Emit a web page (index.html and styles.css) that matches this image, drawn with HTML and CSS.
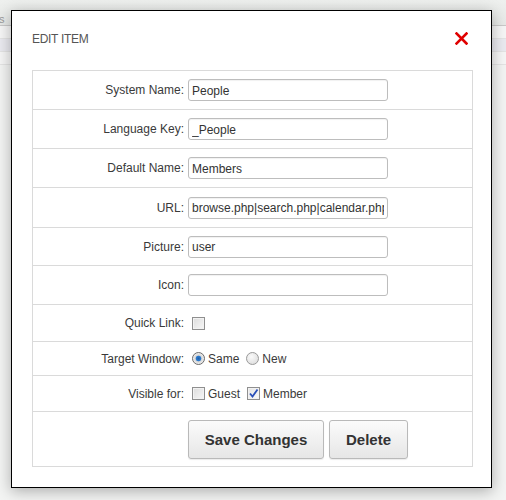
FILE: index.html
```html
<!DOCTYPE html>
<html>
<head>
<meta charset="utf-8">
<link rel="stylesheet" href="styles.css">
</head>
<body>
<div class="page">
  <div class="topbar"><span class="crumb">s</span></div>
  <div class="band"></div>
  <div class="band alt"></div>
  <div class="band"></div>
</div>

<div class="modal">
  <div class="modal-head">
    <span class="modal-title">EDIT ITEM</span>
    <span class="close" aria-label="close">
      <svg width="13" height="13" viewBox="0 0 13 13"><path d="M1.5 1.5 L11.5 11.5 M11.5 1.5 L1.5 11.5" stroke="#e00000" stroke-width="2.6" stroke-linecap="square"/></svg>
    </span>
  </div>
  <table class="form">
    <tr class="r-text"><td class="lbl">System Name:</td><td class="fld"><input class="txt" type="text" value="People"></td></tr>
    <tr class="r-text"><td class="lbl">Language Key:</td><td class="fld"><input class="txt" type="text" value="_People"></td></tr>
    <tr class="r-text"><td class="lbl">Default Name:</td><td class="fld"><input class="txt" type="text" value="Members"></td></tr>
    <tr class="r-text r-tall"><td class="lbl">URL:</td><td class="fld"><input class="txt" type="text" value="browse.php|search.php|calendar.php"></td></tr>
    <tr class="r-text r-short"><td class="lbl">Picture:</td><td class="fld"><input class="txt" type="text" value="user"></td></tr>
    <tr class="r-text"><td class="lbl">Icon:</td><td class="fld"><input class="txt" type="text" value=""></td></tr>
    <tr class="r-quick"><td class="lbl">Quick Link:</td><td class="fld"><span class="opts"><span class="cb"></span></span></td></tr>
    <tr class="r-target"><td class="lbl">Target Window:</td><td class="fld"><span class="opts"><span class="rd on"></span><span class="opt-t">Same</span><span class="rd"></span><span class="opt-t">New</span></span></td></tr>
    <tr class="r-vis"><td class="lbl">Visible for:</td><td class="fld"><span class="opts"><span class="cb"></span><span class="opt-t">Guest</span><span class="cb on"><svg width="11" height="11" viewBox="0 0 11 11"><path d="M2 5.5 L4.5 8.5 L9.5 1.5" fill="none" stroke="#2a4fb8" stroke-width="1.8"/></svg></span><span class="opt-t">Member</span></span></td></tr>
    <tr class="r-btn"><td class="lbl"></td><td class="fld"><div class="btns"><button class="btn save">Save Changes</button><button class="btn del">Delete</button></div></td></tr>
  </table>
</div>
</body>
</html>
```

FILE: styles.css
```css
html, body {
  margin: 0;
  padding: 0;
}
body {
  width: 506px;
  height: 500px;
  overflow: hidden;
  background: #f3f4f3;
  font-family: "Liberation Sans", Arial, sans-serif;
  font-size: 12px;
  color: #333;
  position: relative;
}
.page {
  width: 506px;
}
.topbar {
  height: 26px;
  background: linear-gradient(#eef0ee, #e7e9e7);
  border-bottom: 1px solid #c9c9c9;
  box-sizing: border-box;
  position: relative;
}
.crumb {
  display: block;
  padding-top: 13px;
  margin-left: -1px;
  font-size: 11px;
  color: #999;
}
.band {
  height: 12px;
  background: #f6f6f6;
  border-bottom: 1px solid #e4e4e4;
}
.band.alt {
  background: #eaeaf0;
}

.modal {
  position: absolute;
  left: 11px;
  top: 10px;
  width: 481px;
  height: 478px;
  box-sizing: border-box;
  background: #fff;
  border: 1px solid #000;
  box-shadow: 0 3px 14px rgba(0, 0, 0, 0.3);
  padding: 20px 19px 20px 20px;
}
.modal-head {
  display: flex;
  justify-content: space-between;
  align-items: center;
  height: 16px;
  margin-bottom: 23px;
}
.modal-title {
  font-size: 12px;
  color: #555;
  letter-spacing: -0.3px;
}
.close {
  display: flex;
  margin-right: 4px;
  margin-top: -1px;
}

.form {
  width: 441px;
  border-collapse: collapse;
  border: 1px solid #dadada;
}
.form td {
  border-top: 1px solid #dadada;
  padding: 0;
  vertical-align: middle;
}
.form .lbl {
  width: 151px;
  padding-right: 4px;
  text-align: right;
  color: #3a3a3a;
  white-space: nowrap;
}
.r-text td { height: 38px; }
.r-tall td { height: 39px; }
.r-short td { height: 37px; }
.r-quick td { height: 36px; }
.r-target td { height: 33px; }
.r-vis td { height: 35px; }
.r-btn td { height: 54px; vertical-align: top; }

.txt {
  display: block;
  box-sizing: border-box;
  width: 200px;
  height: 22px;
  margin: 0;
  padding: 1px 3px 0;
  border: 1px solid #bdbdbd;
  border-radius: 3px;
  box-shadow: inset 0 1px 1px rgba(0,0,0,0.06);
  font-family: "Liberation Sans", Arial, sans-serif;
  font-size: 12px;
  color: #333;
  background: #fff;
  outline: none;
}

.opts {
  display: flex;
  align-items: center;
  padding-left: 4px;
}
.opt-t {
  margin-left: 3px;
  margin-right: 7px;
  color: #3a3a3a;
}
.cb {
  display: inline-flex;
  align-items: center;
  justify-content: center;
  width: 13px;
  height: 13px;
  box-sizing: border-box;
  border: 1px solid #8f8f8f;
  background: linear-gradient(135deg, #dcdcdc, #f7f7f7);
  box-shadow: inset 0 0 0 1px #f2f2f2;
}
.cb.on {
  background: linear-gradient(135deg, #e4e4e4, #fafafa);
}
.rd {
  display: inline-block;
  width: 13px;
  height: 13px;
  box-sizing: border-box;
  border-radius: 50%;
  border: 1px solid #9a9a9a;
  background: radial-gradient(circle at 40% 35%, #fafafa, #d8d8d8);
}
.rd.on {
  border-color: #6b6b6b;
  background: radial-gradient(circle at 50% 50%, #1f5fa8 0, #2d7dd2 2.5px, #d6d6d6 3.2px, #f3f3f3 6px);
}

.btns {
  display: flex;
  gap: 5px;
  padding-top: 8px;
}
.btn {
  height: 39px;
  box-sizing: border-box;
  border: 1px solid #b9b9b9;
  border-radius: 3px;
  background: linear-gradient(#fbfbfb, #e6e6e6);
  box-shadow: 0 1px 1px rgba(0,0,0,0.08);
  font-family: "Liberation Sans", Arial, sans-serif;
  font-weight: bold;
  font-size: 15px;
  color: #333;
  padding: 0;
  cursor: pointer;
}
.save { width: 136px; }
.del { width: 79px; }
```
